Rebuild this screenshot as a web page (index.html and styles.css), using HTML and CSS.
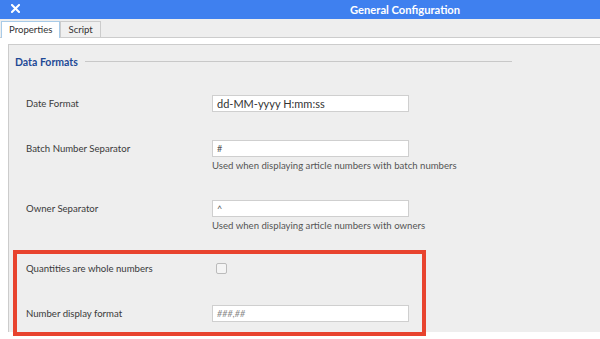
FILE: index.html
```html
<!DOCTYPE html>
<html lang="en">
<head>
    <meta charset="UTF-8">
    <title>General Configuration</title>
    <link rel="stylesheet" href="styles.css">
</head>
<body>

    <!-- Window title bar -->
    <div class="titlebar">
        <svg class="close-icon" width="9" height="9" viewBox="0 0 9 9">
            <path d="M1 1 L8 8 M8 1 L1 8" stroke="#fff" stroke-width="2" stroke-linecap="square"/>
        </svg>
        <div class="title">General Configuration</div>
    </div>

    <!-- Tabs -->
    <div class="tabs">
        <div class="tab active">Properties</div>
        <div class="tab">Script</div>
    </div>

    <div class="tab-body">
        <div class="panel">
            <div class="section-title">
                <span>Data Formats</span>
                <div class="section-line"></div>
            </div>

            <div class="form">
                <div class="label">Date Format</div>
                <div class="field">
                    <div class="input">dd-MM-yyyy H:mm:ss</div>
                </div>

                <div class="label">Batch Number Separator</div>
                <div class="field">
                    <div class="input small">#</div>
                    <div class="help">Used when displaying article numbers with batch numbers</div>
                </div>

                <div class="label">Owner Separator</div>
                <div class="field">
                    <div class="input small">^</div>
                    <div class="help">Used when displaying article numbers with owners</div>
                </div>

                <div class="label">Quantities are whole numbers</div>
                <div class="field">
                    <div class="checkbox"></div>
                </div>

                <div class="label">Number display format</div>
                <div class="field">
                    <div class="input placeholder">###,##</div>
                </div>
            </div>
        </div>
    </div>

    <!-- Highlight annotation -->
    <div class="highlight"></div>

</body>
</html>
```

FILE: styles.css
```css
body {
    margin: 0;
    background: #fff;
    font-family: Lato, "Open Sans", sans-serif;
    color: #333;
    overflow: hidden;
}

/* Title Bar */
.titlebar {
    height: 19px;
    background: #3f80ef;
    display: flex;
    align-items: center;
}

.close-icon {
    margin-left: 11px;
    margin-top: -3px;
}

.title {
    margin-left: 330px;
    color: #fff;
    font-weight: bold;
    font-size: 11.2px;
}

/* Tabs */
.tabs {
    height: 18px;
    background: #eee;
    border-bottom: 1px solid #ccc;
    display: flex;
    align-items: flex-end;
    padding-left: 1px;
}

.tab {
    height: 15px;
    line-height: 16px;
    padding: 0 7px;
    font-size: 9.6px;
    color: #333;
    background: #f0f0f0;
    border: 1px solid #ccc;
    border-bottom: none;
}

.tab.active {
    background: #fff;
    border-color: #a8cbe8;
    height: 16px;
    margin-bottom: -1px;
}

/* Tab Body */
.tab-body {
    padding: 6px 0 0 8px;
}

.panel {
    background: #eee;
    border-top: 1px solid #ccc;
    border-left: 1px solid #ccc;
    padding: 10px 0 10px 6px;
}

.section-title {
    display: flex;
    align-items: center;
    width: 497px;
    height: 14px;
    font-size: 10.5px;
    font-weight: bold;
    color: #1e4a96;
}

.section-line {
    flex: 1;
    height: 1px;
    background: #c8c8c8;
    margin-left: 7px;
    margin-top: -2px;
}

/* Form */
.form {
    display: grid;
    grid-template-columns: 186px 197px;
    row-gap: 28px;
    margin: 26px 0 0 11px;
}

.label {
    font-size: 9.6px;
    line-height: 17px;
    color: #3a3a3a;
}

.input {
    box-sizing: border-box;
    height: 17px;
    line-height: 15px;
    padding-left: 4px;
    background: #fff;
    border: 1px solid #cfcfcf;
    font-size: 11px;
    color: #333;
}

.input.small {
    font-size: 9px;
    color: #555;
}

.input.placeholder {
    font-size: 9px;
    font-style: italic;
    color: #888;
}

.help {
    margin-top: 3px;
    line-height: 12px;
    font-size: 9.6px;
    color: #555;
    white-space: nowrap;
}

.checkbox {
    box-sizing: border-box;
    width: 11px;
    height: 11px;
    margin: 3px 0 0 4px;
    border: 1px solid #bbb;
    border-radius: 2px;
    background: #f4f4f4;
}

/* Red highlight box */
.highlight {
    position: absolute;
    left: 13px;
    top: 250px;
    width: 413px;
    height: 86px;
    box-sizing: border-box;
    border: 4px solid #e8432e;
}
```
